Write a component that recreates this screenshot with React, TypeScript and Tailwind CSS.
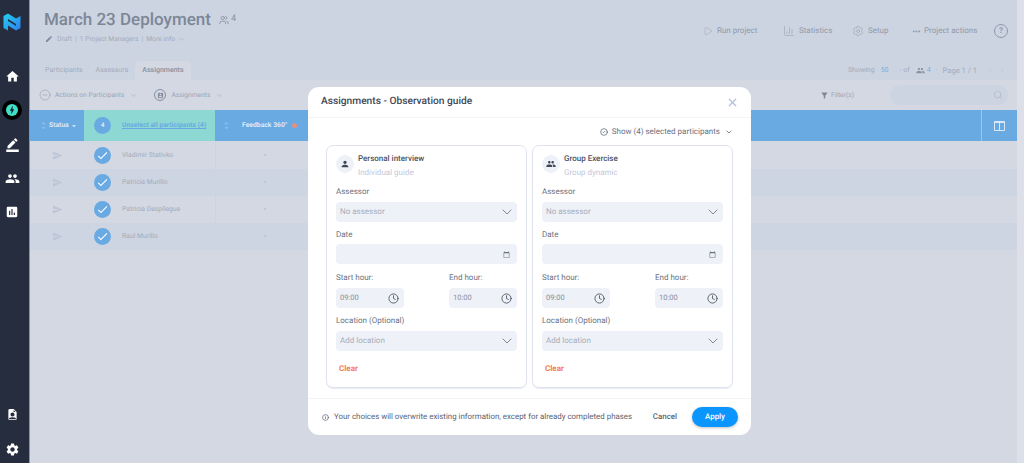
import { ChevronDown, ChevronLeft, ChevronRight, Clock, Play, Settings, Search, X, Info, CircleCheck, Users, ChartColumn, CircleMinus } from "lucide-react"
import { MdHome, MdBorderColor, MdPeople, MdAssessment, MdSettings, MdPerson, MdCalendarToday, MdFilterAlt, MdSend, MdCheck, MdArrowDropDown, MdBolt, MdMoreHoriz, MdUnfoldMore, MdEdit, MdPermContactCalendar } from "react-icons/md"
import { BsFileEarmarkPersonFill } from "react-icons/bs"

const participants = ["Vladimir Stativko", "Patricia Murillo", "Patricia Despilegue", "Raul Murillo"]

function Logo() {
    return (
        <svg width="18" height="18" viewBox="0 0 18 18" fill="none">
            <defs>
                <linearGradient id="logo" x1="0" y1="0" x2="18" y2="18" gradientUnits="userSpaceOnUse">
                    <stop stopColor="#22d3ee" />
                    <stop offset="1" stopColor="#2f7bf0" />
                </linearGradient>
            </defs>
            <path d="M0.5 3 L5 0.5 L13 5.5 L17.5 3 V15 L13 17.5 V11 L5 6 V8 L13 13 V17.5 L5 12.5 V17.5 L0.5 15 Z" fill="url(#logo)" />
        </svg>
    )
}

function Sidebar() {
    return (
        <aside className="flex w-[29px] shrink-0 flex-col items-center bg-[#252d3f] pr-[5px] text-white">
            <div className="mt-[13px]"><Logo /></div>
            <div className="mt-[28px] flex h-[34px] items-center"><MdHome size={15} /></div>
            <div className="flex h-[34px] items-center">
                <div className="flex h-[20px] w-[20px] items-center justify-center rounded-full bg-black">
                    <div className="flex h-[12px] w-[12px] items-center justify-center rounded-full bg-[#3fe0c5]">
                        <MdBolt size={10} className="text-[#10202a]" />
                    </div>
                </div>
            </div>
            <div className="flex h-[34px] items-center"><MdBorderColor size={15} /></div>
            <div className="flex h-[34px] items-center"><MdPeople size={15} /></div>
            <div className="flex h-[34px] items-center"><MdAssessment size={14} /></div>
            <div className="mt-auto flex flex-col items-center gap-[22px] pb-[6px]">
                <BsFileEarmarkPersonFill size={11} />
                <MdSettings size={15} />
            </div>
        </aside>
    )
}

function TopBar() {
    return (
        <div className="flex h-[61px] items-start justify-between pr-[9px] pl-[14px]">
            <div className="pt-[9px]">
                <div className="flex items-center">
                    <h1 className="text-[17px] leading-[22px] font-medium text-[#7c8798]">March 23 Deployment</h1>
                    <span className="ml-[8px] flex items-center gap-[2px] text-[9px] text-[#8893a3]">
                        <Users size={10} /> 4
                    </span>
                </div>
                <div className="mt-[3px] flex items-center text-[6.8px] text-[#a2abbb]">
                    <MdEdit size={8} className="mr-[4px] ml-[1px] text-[#7c8798]" />
                    <span>Draft</span>
                    <span className="mx-[3px]">|</span>
                    <span>1 Project Managers</span>
                    <span className="mx-[3px]">|</span>
                    <span>More info</span>
                    <ChevronDown size={7} className="ml-[3px]" />
                </div>
            </div>
            <div className="flex items-center pt-[24px] text-[8px] text-[#8f99a9]">
                <Play size={10} strokeWidth={1} className="mr-[4px]" />
                <span className="w-[66px]">Run project</span>
                <ChartColumn size={12} strokeWidth={1} className="mr-[4px]" />
                <span className="w-[53px]">Statistics</span>
                <Settings size={12} strokeWidth={1} className="mr-[4px]" />
                <span className="w-[43px]">Setup</span>
                <MdMoreHoriz size={11} className="mr-[2px]" />
                <span className="w-[70px]">Project actions</span>
                <span className="flex h-[14px] w-[14px] items-center justify-center rounded-full border border-[#8f99a9] text-[8px] font-bold">?</span>
            </div>
        </div>
    )
}

function Tabs() {
    return (
        <div className="flex h-[19px] items-end justify-between pr-[10px] pl-[15px] text-[7px]">
            <div className="flex h-full items-center text-[#a2abbb]">
                <span>Participants</span>
                <span className="ml-[13px]">Assessors</span>
                <span className="ml-[7px] flex h-full items-center rounded-t-[5px] bg-[#d4d8e3] px-[7px] font-medium text-[#8590a1]">Assignments</span>
            </div>
            <div className="flex h-full items-center text-[#a2abbb]">
                <span>Showing</span>
                <span className="ml-[6px] text-[#7daae0]">50</span>
                <span className="ml-[11px]">- of</span>
                <MdPeople size={9} className="ml-[6px] text-[#8590a1]" />
                <span className="ml-[2px] text-[#7daae0]">4</span>
                <span className="ml-[5px]">-</span>
                <span className="ml-[5px] text-[7.6px]">Page 1 / 1</span>
                <ChevronLeft size={9} className="ml-[9px] text-[#c0c7d4]" />
                <ChevronRight size={9} className="ml-[3px] text-[#c0c7d4]" />
            </div>
        </div>
    )
}

function Toolbar() {
    return (
        <div className="flex h-[30px] items-center justify-between px-[9px] text-[6.7px] text-[#9ba5b5]">
            <div className="flex items-center">
                <CircleMinus size={12} strokeWidth={1} className="text-[#8590a1]" />
                <span className="ml-[4px]">Actions on Participants</span>
                <ChevronDown size={7} className="ml-[6px]" />
                <span className="ml-[17px] flex h-[12px] w-[12px] items-center justify-center rounded-full border border-[#8590a1]">
                    <MdPermContactCalendar size={7} className="text-[#8590a1]" />
                </span>
                <span className="ml-[5px]">Assignments</span>
                <ChevronDown size={7} className="ml-[6px]" />
            </div>
            <div className="flex items-center">
                <MdFilterAlt size={9} className="text-[#7c8798]" />
                <span className="ml-[2px]">Filter(s)</span>
                <div className="ml-[36px] flex h-[20px] w-[118px] items-center justify-end rounded-full bg-[#cdd4e1] pr-[5px]">
                    <Search size={10} className="text-[#b4bccb]" />
                </div>
            </div>
        </div>
    )
}

function Table() {
    return (
        <div className="text-[6.8px]">
            <div className="flex h-[32px] border-b border-[#d4d8e3] bg-[#6aaae3] font-bold text-[#dce8f6]">
                <div className="flex w-[54px] items-center pl-[9px]">
                    <MdUnfoldMore size={9} className="text-[#9ec7ec]" />
                    <span className="ml-[1px]">Status</span>
                    <MdArrowDropDown size={10} />
                </div>
                <div className="flex w-[131px] items-center bg-[#8dd8d3] pl-[10px]">
                    <span className="flex h-[17px] w-[17px] items-center justify-center rounded-full bg-[#6aaae3] text-[6.5px]">4</span>
                    <span className="ml-[11px] text-[#6aaae3] underline">Unselect all participants (4)</span>
                </div>
                <div className="flex w-[92px] items-center pl-[7px]">
                    <MdUnfoldMore size={9} className="text-[#9ec7ec]" />
                    <span className="ml-[11px]">Feedback 360°</span>
                    <span className="ml-[4px] h-[5px] w-[5px] rounded-full bg-[#e0907f]" />
                </div>
                <div className="flex-1" />
                <div className="flex w-[36px] items-center justify-center border-l border-[#9ec7ec]">
                    <svg width="11" height="10" viewBox="0 0 11 10" fill="#dce8f6">
                        <path d="M1 0h9a1 1 0 0 1 1 1v8a1 1 0 0 1-1 1H1a1 1 0 0 1-1-1V1a1 1 0 0 1 1-1Zm0 2v7h4V2Zm5 0v7h4V2Z" fillRule="evenodd" />
                    </svg>
                </div>
            </div>
            {participants.map((name, i) => (
                <div key={name} className={`flex h-[27px] ${i % 2 === 1 ? "bg-[#ced5e2]" : "bg-[#d4d8e3]"}`}>
                    <div className="flex w-[54px] items-center justify-center">
                        <MdSend size={11} className="text-[#bcc6d6]" />
                    </div>
                    <div className="flex w-[131px] items-center pl-[10px]">
                        <span className="flex h-[17px] w-[17px] items-center justify-center rounded-full bg-[#6aaae3] text-white">
                            <MdCheck size={13} />
                        </span>
                        <span className="ml-[11px] text-[#a2abbb]">{name}</span>
                    </div>
                    <div className="flex w-[99px] items-center justify-center border-l border-[#cdd4e1] text-[#8590a1]">-</div>
                </div>
            ))}
        </div>
    )
}

function Select({ value }: { value: string }) {
    return (
        <div className="flex h-[20px] items-center justify-between rounded-[4px] bg-[#eef1f8] pr-[2px] pl-[4px] text-[8px] text-[#a6adb9]">
            <span>{value}</span>
            <ChevronDown size={16} strokeWidth={1} className="text-[#4b5363]" />
        </div>
    )
}

function TimeInput({ value }: { value: string }) {
    return (
        <div className="flex h-[20px] w-[68px] items-center justify-between rounded-[4px] bg-[#eef1f8] pr-[5px] pl-[4px] text-[7.5px] text-[#868d9a]">
            <span>{value}</span>
            <Clock size={11} strokeWidth={1.75} className="text-[#3f4654]" />
        </div>
    )
}

function GuideCard({ title, sub, group }: { title: string; sub: string; group?: boolean }) {
    return (
        <div className="h-[243px] w-[201px] rounded-[7px] border border-[#dfe3ee] px-[9px] pt-[8px] shadow-[0_1px_1px_#e8ebf3]">
            <div className="flex h-[22px]">
                <span className="mt-px flex h-[18px] w-[18px] items-center justify-center rounded-full bg-[#eef1f8] text-[#3f4654]">
                    {group ? <MdPeople size={10} /> : <MdPerson size={10} />}
                </span>
                <div className="ml-[4px] leading-none">
                    <div className="text-[8px] leading-[10px] font-medium text-[#4b5363]">{title}</div>
                    <div className="mt-[4px] text-[8px] leading-[10px] text-[#c3c9db]">{sub}</div>
                </div>
            </div>
            <div className="mt-[11px] text-[8px] leading-[10px] text-[#6b7280]">Assessor</div>
            <div className="mt-[5px]"><Select value="No assessor" /></div>
            <div className="mt-[8px] text-[8px] leading-[10px] text-[#6b7280]">Date</div>
            <div className="mt-[4px] flex h-[20px] items-center justify-end rounded-[4px] bg-[#eef1f8] pr-[7px]">
                <MdCalendarToday size={7} className="text-[#6b7280]" />
            </div>
            <div className="mt-[9px] flex justify-between text-[8px] leading-[10px] text-[#6b7280]">
                <span>Start hour:</span>
                <span className="w-[68px]">End hour:</span>
            </div>
            <div className="mt-[5px] flex justify-between">
                <TimeInput value="09:00" />
                <TimeInput value="10:00" />
            </div>
            <div className="mt-[8px] text-[8px] leading-[10px] text-[#6b7280]">Location (Optional)</div>
            <div className="mt-[5px]"><Select value="Add location" /></div>
            <div className="mt-[13px] pl-[3px] text-[8px] leading-[10px] font-bold text-[#f47b5b]">Clear</div>
        </div>
    )
}

function Modal() {
    return (
        <div className="absolute top-[87px] left-[308px] h-[348px] w-[443px] rounded-[11px] bg-white">
            <div className="flex h-[31px] items-center justify-between border-b border-[#f3f4f8] pr-[12px] pl-[13px]">
                <h2 className="text-[10.2px] font-medium text-[#3f4654]">Assignments - Observation guide</h2>
                <X size={13} strokeWidth={2.25} className="text-[#b4c0d6]" />
            </div>
            <div className="flex h-[27px] items-center justify-end pr-[18px] text-[8px] text-[#6b7280]">
                <CircleCheck size={8} className="mr-[4px] text-[#4b5363]" />
                <span>Show (4) selected participants</span>
                <ChevronDown size={8} className="ml-[5px] text-[#4b5363]" />
            </div>
            <div className="flex gap-[5px] pl-[18px]">
                <GuideCard title="Personal interview" sub="Individual guide" />
                <GuideCard title="Group Exercise" sub="Group dynamic" group />
            </div>
            <div className="mt-[10px] flex h-[37px] items-center border-t border-[#f3f4f8] pr-[13px] pl-[14px] text-[7.9px] text-[#5b6372]">
                <Info size={7} className="mr-[5px] text-[#3f4654]" />
                <span className="whitespace-nowrap">Your choices will overwrite existing information, except for already completed phases</span>
                <span className="ml-auto font-medium">Cancel</span>
                <span className="ml-[15px] flex h-[20px] w-[46px] items-center justify-center rounded-full bg-[#0a95ff] font-medium text-white shadow-[0_1px_3px_rgba(0,0,0,0.25)]">Apply</span>
            </div>
        </div>
    )
}

export default function App() {
    return (
        <div className="relative flex h-[463px] w-[1024px] overflow-hidden bg-[#d4d8e3] font-['Roboto',sans-serif] [text-rendering:geometricPrecision]">
            <Sidebar />
            <main className="flex-1 border-l border-[#8a93a5]">
                <div className="bg-[#cdd4e1]">
                    <TopBar />
                    <Tabs />
                </div>
                <Toolbar />
                <Table />
            </main>
            <div className="w-[7px] shrink-0 bg-[#dde0e8]" />
            <Modal />
        </div>
    )
}
